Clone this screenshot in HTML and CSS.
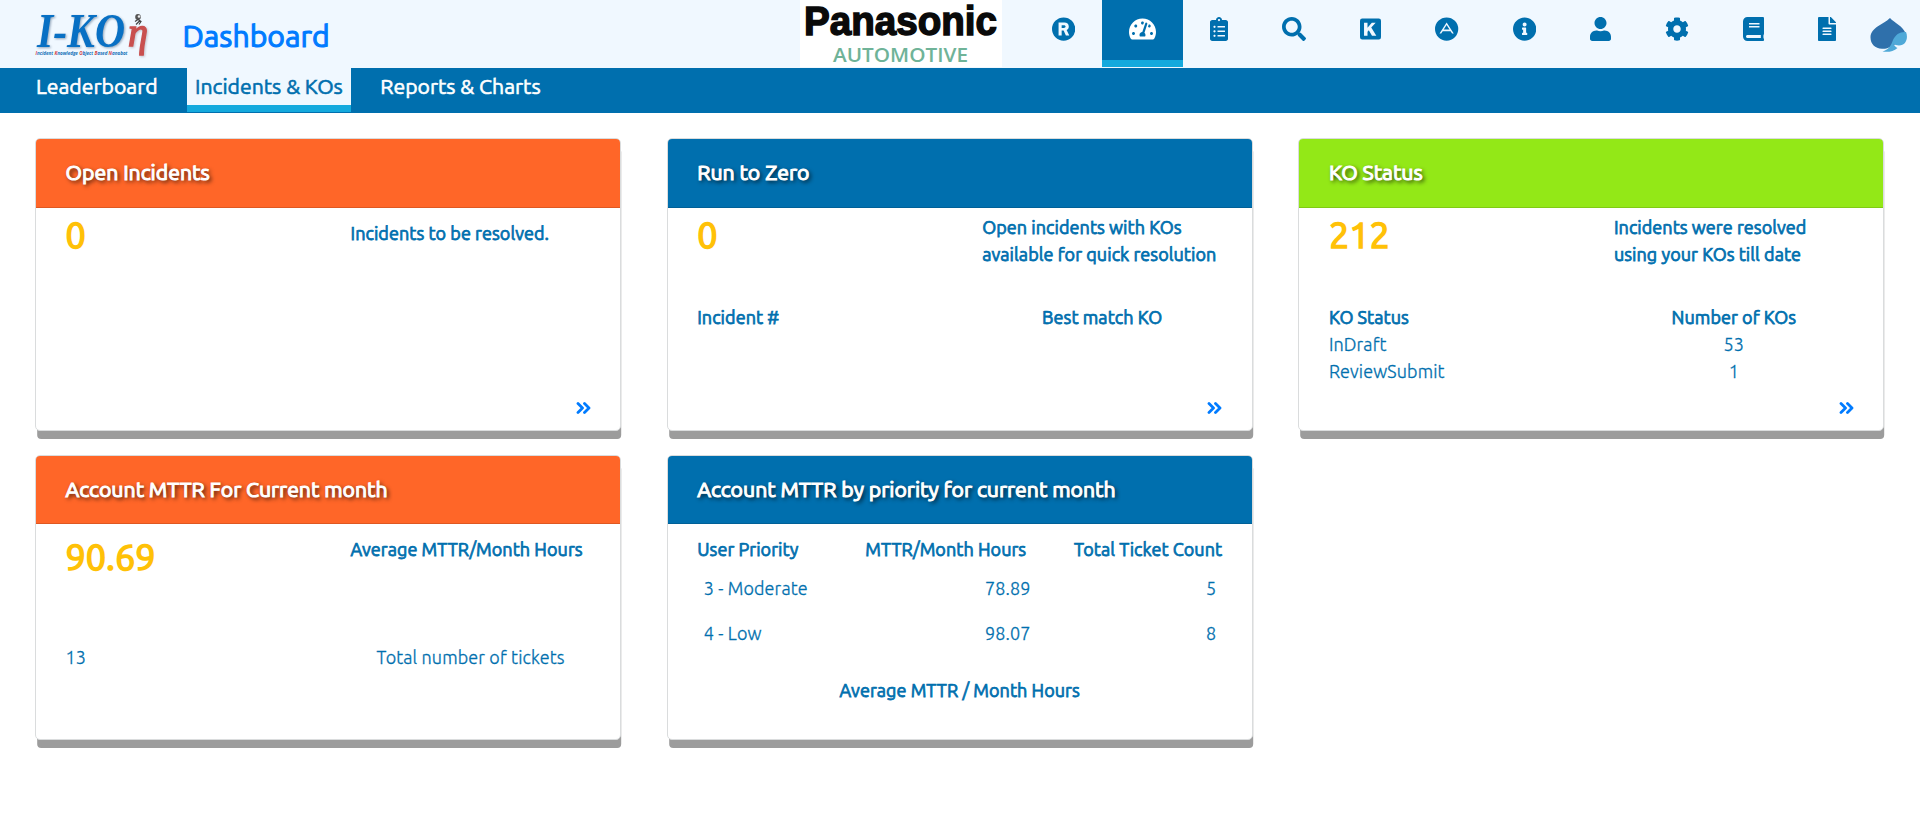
FILE: index.html
```html
<!DOCTYPE html>
<html lang="en">
<head>
<meta charset="utf-8">
<title>Dashboard</title>
<link rel="stylesheet" href="styles.css">
</head>
<body>
<header class="topbar">
  <svg class="logo" width="120" height="56" viewBox="0 0 120 56">
    <text class="logo-main" x="2" y="40.500" font-size="48" textLength="88" lengthAdjust="spacingAndGlyphs">I-KO</text>
    <text class="logo-eta" x="93" y="39.500" font-size="43" textLength="20" lengthAdjust="spacingAndGlyphs">η</text>
    <ellipse cx="103" cy="11" rx="2.800" ry="3" fill="#555"/>
    <circle cx="104" cy="10.500" r="1.300" fill="#eee"/>
    <path d="M100 15.500l3-2 3 2-2 3M101 18.500l4-4" stroke="#444" stroke-width="1.200" fill="none"/>
    <text class="logo-tag" x="0.500" y="48.500" font-size="5.800" textLength="92" lengthAdjust="spacingAndGlyphs"><tspan>I</tspan>ncident <tspan>K</tspan>nowledge <tspan>O</tspan>bject <tspan>B</tspan>ased <tspan>N</tspan>anobot</text>
  </svg>
  <h1 class="page-title">Dashboard</h1>
  <svg class="brand" width="202" height="67" viewBox="0 0 202 67">
    <rect width="202" height="67" fill="#fff"/>
    <text class="brand-name" x="4" y="34.500" font-size="41" textLength="193" lengthAdjust="spacingAndGlyphs">Panasonic</text>
    <text class="brand-sub" x="33" y="62" font-size="20.500" textLength="135" lengthAdjust="spacingAndGlyphs">AUTOMOTIVE</text>
  </svg>
  <nav class="icons">
    <a><svg class="w-496" viewBox="0 0 496 512"><path fill-rule="evenodd" d="M248 8a248 248 0 1 0 0 496a248 248 0 1 0 0-496zM140 118h122c60 0 96 32 96 84 0 36-18 62-46 76l56 114h-72l-48-102h-42v102h-66zM206 174v62h46c24 0 38-12 38-31s-14-31-38-31z"/></svg></a>
    <a class="active"><svg class="w-576" viewBox="0 0 576 512"><path d="M288 32C128.940 32 0 160.940 0 320c0 52.800 14.250 102.260 39.060 144.800 5.610 9.620 16.300 15.200 27.440 15.200h443c11.140 0 21.830-5.580 27.440-15.200C561.750 422.260 576 372.800 576 320c0-159.060-128.940-288-288-288zm0 64c14.710 0 26.580 10.130 30.320 23.650-1.110 2.260-2.640 4.230-3.450 6.670l-9.220 27.670c-5.130 3.490-10.970 6.010-17.640 6.010-17.670 0-32-14.330-32-32S270.330 96 288 96zM96 384c-17.670 0-32-14.330-32-32s14.330-32 32-32 32 14.330 32 32-14.330 32-32 32zm48-160c-17.670 0-32-14.330-32-32s14.330-32 32-32 32 14.330 32 32-14.330 32-32 32zm246.770-72.410l-61.330 184C343.130 347.330 352 364.540 352 384c0 11.720-3.380 22.550-8.880 32H232.880c-5.500-9.450-8.880-20.280-8.880-32 0-33.940 26.500-61.430 59.900-63.590l61.340-184.010c4.170-12.560 17.730-19.450 30.360-15.170 12.570 4.190 19.350 17.790 15.170 30.360zm14.660 57.200l15.520-46.550c3.470-1.290 7.130-2.230 11.050-2.230 17.670 0 32 14.330 32 32s-14.330 32-32 32c-11.380-.010-20.890-6.280-26.570-15.220zM480 384c-17.670 0-32-14.330-32-32s14.330-32 32-32 32 14.330 32 32-14.330 32-32 32z"/></svg></a>
    <a><svg class="w-384" viewBox="0 0 384 512"><path d="M336 64h-80c0-35.300-28.700-64-64-64s-64 28.700-64 64H48C21.500 64 0 85.500 0 112v352c0 26.500 21.500 48 48 48h288c26.500 0 48-21.500 48-48V112c0-26.500-21.500-48-48-48zM96 424c-13.300 0-24-10.700-24-24s10.700-24 24-24 24 10.700 24 24-10.700 24-24 24zm0-96c-13.300 0-24-10.700-24-24s10.700-24 24-24 24 10.700 24 24-10.700 24-24 24zm0-96c-13.300 0-24-10.700-24-24s10.700-24 24-24 24 10.700 24 24-10.700 24-24 24zm96-192c13.300 0 24 10.700 24 24s-10.700 24-24 24-24-10.700-24-24 10.700-24 24-24zm128 368c0 4.400-3.600 8-8 8H168c-4.400 0-8-3.600-8-8v-16c0-4.400 3.600-8 8-8h144c4.400 0 8 3.600 8 8v16zm0-96c0 4.400-3.600 8-8 8H168c-4.400 0-8-3.600-8-8v-16c0-4.400 3.600-8 8-8h144c4.400 0 8 3.600 8 8v16zm0-96c0 4.400-3.600 8-8 8H168c-4.400 0-8-3.600-8-8v-16c0-4.400 3.600-8 8-8h144c4.400 0 8 3.600 8 8v16z"/></svg></a>
    <a><svg class="w-512" viewBox="0 0 512 512"><path d="M505 442.700L405.300 343c-4.500-4.500-10.600-7-17-7H372c27.600-35.300 44-79.700 44-128C416 93.100 322.900 0 208 0S0 93.100 0 208s93.100 208 208 208c48.300 0 92.700-16.400 128-44v16.300c0 6.400 2.500 12.500 7 17l99.700 99.700c9.400 9.400 24.600 9.400 33.900 0l28.300-28.300c9.400-9.400 9.400-24.600.1-34zM208 336c-70.700 0-128-57.200-128-128 0-70.700 57.200-128 128-128 70.700 0 128 57.200 128 128 0 70.700-57.200 128-128 128z"/></svg></a>
    <a><svg class="w-448" viewBox="0 0 448 512"><path fill-rule="evenodd" d="M48 32h352a48 48 0 0 1 48 48v352a48 48 0 0 1-48 48H48a48 48 0 0 1-48-48V80a48 48 0 0 1 48-48zM86 120v278h74v-84l28-32 68 116h92L240 226l94-106h-82l-92 110V120z"/></svg></a>
    <a><svg class="w-496" viewBox="0 0 496 512"><path fill-rule="evenodd" d="M248 8a248 248 0 1 0 0 496a248 248 0 1 0 0-496zM248 118L96 350h36l32-48h168l32 48h36zM248 168l62 100H186z"/></svg></a>
    <a><svg class="w-496" viewBox="8 0 496 512"><path d="M256 8C119.043 8 8 119.083 8 256c0 136.997 111.043 248 248 248s248-111.003 248-248C504 119.083 392.957 8 256 8zm0 110c23.196 0 42 18.804 42 42s-18.804 42-42 42-42-18.804-42-42 18.804-42 42-42zm56 254c0 6.627-5.373 12-12 12h-88c-6.627 0-12-5.373-12-12v-24c0-6.627 5.373-12 12-12h12v-64h-12c-6.627 0-12-5.373-12-12v-24c0-6.627 5.373-12 12-12h64c6.627 0 12 5.373 12 12v100h12c6.627 0 12 5.373 12 12v24z"/></svg></a>
    <a><svg class="w-448" viewBox="0 0 448 512"><path d="M224 256c70.700 0 128-57.300 128-128S294.700 0 224 0 96 57.300 96 128s57.300 128 128 128zm89.600 32h-16.700c-22.200 10.200-46.900 16-72.900 16s-50.600-5.800-72.900-16h-16.700C60.200 288 0 348.200 0 422.400V464c0 26.500 21.500 48 48 48h352c26.500 0 48-21.500 48-48v-41.600c0-74.200-60.200-134.400-134.400-134.400z"/></svg></a>
    <a><svg class="w-512" viewBox="0 0 512 512"><path d="M487.400 315.700l-42.600-24.600c4.300-23.200 4.300-47 0-70.200l42.600-24.600c4.900-2.800 7.100-8.600 5.500-14-11.100-35.600-30-67.800-54.700-94.600-3.800-4.100-10-5.100-14.800-2.300L380.800 110c-17.900-15.400-38.500-27.300-60.800-35.100V25.800c0-5.600-3.900-10.500-9.400-11.700-36.700-8.200-74.300-7.800-109.200 0-5.500 1.200-9.400 6.100-9.400 11.700V75c-22.200 7.900-42.800 19.800-60.800 35.100L88.700 85.500c-4.900-2.800-11-1.900-14.800 2.300-24.700 26.700-43.600 58.900-54.700 94.600-1.700 5.400.6 11.200 5.500 14L67.300 221c-4.300 23.200-4.300 47 0 70.200l-42.600 24.600c-4.900 2.800-7.100 8.600-5.500 14 11.100 35.600 30 67.800 54.700 94.600 3.800 4.100 10 5.100 14.800 2.300l42.600-24.600c17.900 15.400 38.500 27.300 60.800 35.100v49.200c0 5.600 3.900 10.500 9.400 11.700 36.700 8.200 74.300 7.800 109.200 0 5.500-1.200 9.400-6.100 9.400-11.700v-49.200c22.200-7.900 42.800-19.800 60.800-35.100l42.600 24.600c4.900 2.800 11 1.900 14.800-2.300 24.700-26.700 43.600-58.900 54.700-94.600 1.500-5.500-.7-11.300-5.600-14.100zM256 336c-44.100 0-80-35.900-80-80s35.900-80 80-80 80 35.900 80 80-35.900 80-80 80z"/></svg></a>
    <a><svg class="w-448" viewBox="0 0 448 512"><path d="M448 360V24c0-13.300-10.700-24-24-24H96C43 0 0 43 0 96v320c0 53 43 96 96 96h328c13.300 0 24-10.700 24-24v-16c0-7.500-3.500-14.300-8.900-18.700-4.200-15.400-4.200-59.300 0-74.700 5.400-4.300 8.900-11.100 8.900-18.600zM128 134c0-3.300 2.700-6 6-6h212c3.300 0 6 2.700 6 6v20c0 3.300-2.700 6-6 6H134c-3.300 0-6-2.700-6-6v-20zm0 64c0-3.300 2.700-6 6-6h212c3.300 0 6 2.700 6 6v20c0 3.300-2.700 6-6 6H134c-3.300 0-6-2.700-6-6v-20zm253.400 250H96c-17.700 0-32-14.300-32-32 0-17.600 14.400-32 32-32h285.400c-1.900 17.100-1.900 46.900 0 64z"/></svg></a>
    <a><svg class="w-384" viewBox="0 0 384 512"><path d="M224 136V0H24C10.700 0 0 10.700 0 24v464c0 13.300 10.700 24 24 24h336c13.300 0 24-10.700 24-24V160H248c-13.200 0-24-10.800-24-24zm64 236c0 6.600-5.400 12-12 12H108c-6.600 0-12-5.400-12-12v-8c0-6.600 5.400-12 12-12h168c6.600 0 12 5.400 12 12v8zm0-64c0 6.600-5.400 12-12 12H108c-6.600 0-12-5.400-12-12v-8c0-6.600 5.400-12 12-12h168c6.600 0 12 5.400 12 12v8zm0-72v8c0 6.600-5.400 12-12 12H108c-6.600 0-12-5.400-12-12v-8c0-6.600 5.400-12 12-12h168c6.600 0 12 5.400 12 12zm96-114.100v6.100H256V0h6.100c6.400 0 12.500 2.500 17 7l97.900 98c4.500 4.500 7 10.600 7 16.900z"/></svg></a>
  </nav>
  <svg class="spade" width="38" height="35" viewBox="0 0 38 35">
    <path fill="#2f70ab" d="M20 0C24 4.500 33 8 36 16 36 24 27 25 21.500 28 18.500 30.300 15 31 12 30.800 5 30.500 0.500 26 0.500 19.500 0.500 9.500 14 6 20 0z"/>
    <path fill="#4fa9d8" d="M36 14C38.500 20 36 27.500 29 27.500 26.500 27.500 25 26.800 23.500 25.800 24.500 28 25.500 29 27.500 30 23.500 33.500 18 34.500 12.500 33.500 18.500 32 21 27.500 23 22 25.500 16.500 30 13.500 36 14z"/>
  </svg>
</header>
<nav class="tabs">
  <a>Leaderboard</a>
  <a class="active">Incidents &amp; KOs</a>
  <a>Reports &amp; Charts</a>
</nav>
<main class="board">
  <section class="card orange">
    <h2>Open Incidents</h2>
    <div class="body">
      <div class="summary"><b class="big">0</b><p class="one">Incidents to be resolved.</p></div>
      <a class="more"><svg width="15" height="12" viewBox="0 0 15 12"><path d="M2 1.500L6.500 6 2 10.500M8.500 1.500L13 6l-4.500 4.500"/></svg></a>
    </div>
  </section>
  <section class="card blue">
    <h2>Run to Zero</h2>
    <div class="body">
      <div class="summary"><b class="big">0</b><p>Open incidents with KOs<br>available for quick resolution</p></div>
      <div class="pair head"><span>Incident #</span><span>Best match KO</span></div>
      <a class="more"><svg width="15" height="12" viewBox="0 0 15 12"><path d="M2 1.500L6.500 6 2 10.500M8.500 1.500L13 6l-4.500 4.500"/></svg></a>
    </div>
  </section>
  <section class="card green">
    <h2>KO Status</h2>
    <div class="body">
      <div class="summary"><b class="big">212</b><p>Incidents were resolved<br>using your KOs till date</p></div>
      <div class="pair head"><span>KO Status</span><span>Number of KOs</span></div>
      <div class="pair"><span>InDraft</span><span>53</span></div>
      <div class="pair"><span>ReviewSubmit</span><span>1</span></div>
      <a class="more"><svg width="15" height="12" viewBox="0 0 15 12"><path d="M2 1.500L6.500 6 2 10.500M8.500 1.500L13 6l-4.500 4.500"/></svg></a>
    </div>
  </section>
  <section class="card orange short">
    <h2>Account MTTR For Current month</h2>
    <div class="body">
      <div class="summary"><b class="big">90.69</b><p>Average MTTR/Month Hours</p></div>
      <div class="pair"><span>13</span><span>Total number of tickets</span></div>
    </div>
  </section>
  <section class="card blue short">
    <h2>Account MTTR by priority for current month</h2>
    <div class="body">
      <div class="triple"><span>User Priority</span><span>MTTR/Month Hours</span><span>Total Ticket Count</span></div>
      <div class="row"><span>3 - Moderate</span><span>78.89</span><span>5</span></div>
      <div class="row"><span>4 - Low</span><span>98.07</span><span>8</span></div>
      <div class="foot">Average MTTR / Month Hours</div>
    </div>
  </section>
</main>
</body>
</html>
```
FILE: styles.css
```css
* { box-sizing: border-box; }
body { margin: 0; min-height: 834px; background: #fff; color: #006fae; font: 300 18px/27px "Ubuntu", "Noto Sans", sans-serif; }
h1, h2, p { margin: 0; font-weight: 400; }

.topbar { display: flex; align-items: flex-start; height: 68px; background: #f0f8ff; }
.logo { margin: 6px 0 0 35px; flex: none; }
.logo text { font-family: "Liberation Serif", serif; font-style: italic; font-weight: bold; }
.logo .logo-main { fill: #0870c4; filter: drop-shadow(1px 1.5px 1px #8fa3b8); }
.logo .logo-eta { fill: #c9504f; font-weight: normal; stroke: #c9504f; stroke-width: 1.4px; filter: drop-shadow(1px 1px 1px #c3c3cc); }
.logo .logo-tag { fill: #1873b9; font-family: "Open Sans", sans-serif; }
.logo-tag tspan { fill: #d2403c; }
.page-title { flex: none; width: 645px; padding-left: 27.500px; margin-top: 16px; color: #007bff; font-size: 30.200px; line-height: 40px; -webkit-text-stroke: 1.1px; }
.brand { flex: none; }
.brand-name { font-family: "Liberation Sans", sans-serif; font-weight: bold; fill: #0a0a0a; stroke: #0a0a0a; stroke-width: 1.5px; }
.brand-sub { font-family: "Open Sans", sans-serif; font-weight: 600; fill: #6fb398; }
.icons { display: flex; margin-left: 23px; flex: none; }
.icons a { padding: 17px 27px 0; height: 67px; }
.icons svg { display: block; height: 24px; fill: #006fae; }
.icons .active { background: #006fae; border-bottom: 7px solid #14a9dd; }
.icons .active svg { fill: #fff; }
.icons .w-384 { width: 18px; }
.icons .w-448 { width: 21px; }
.icons .w-496 { width: 23.250px; }
.icons .w-512 { width: 24px; }
.icons .w-576 { width: 27px; }
.spade { flex: none; margin: 18px 0 0 7.500px; }

.tabs { display: flex; gap: 21.500px; height: 45px; padding-left: 28px; background: #006fae; }
.tabs a { height: 44px; padding: 3px 8px 0; color: #fff; font-size: 21.200px; font-weight: 400; line-height: 30px; -webkit-text-stroke: 0.6px; }
.tabs .active { background: #f0f8ff; color: #006fae; border-bottom: 7px solid #14a9dd; }

.board { display: grid; grid-template-columns: repeat(3, 586px); column-gap: 45.700px; row-gap: 25px; padding: 25px 0 40px 35px; }
.card { height: 292.500px; margin-bottom: -0.500px; border: 1px solid #dadcdd; border-radius: 5px; background: #fff; box-shadow: 1.2px 9px 0 -1px #9c9c9c; display: flex; flex-direction: column; }
.card.short { height: 285px; }
.card h2 { height: 69px; padding: 18px 29.500px 0; border-bottom: 1px solid rgba(0, 0, 0, 0.13); border-radius: 4px 4px 0 0; color: #fff; font-size: 21.250px; line-height: 30px; -webkit-text-stroke: 1.1px; text-shadow: 2px 2px 4px #000; }
.card.short h2 { height: 68px; }
.orange h2 { background: #ff6628; }
.blue h2 { background: #006fae; }
.green h2 { background: #93e817; }
.body { flex: 1; display: flex; flex-direction: column; padding: 6px 29.500px 0; }
.summary { display: grid; grid-template-columns: 285px 1fr; height: 90px; }
.summary p, .head, .triple, .foot { font-weight: 400; letter-spacing: 0.060px; -webkit-text-stroke: 0.75px; }
.summary .one { padding-top: 6px; }
.big { color: #ffc107; font-size: 36px; font-weight: 400; line-height: 40px; padding-top: 1px; -webkit-text-stroke: 1.6px; }
.pair { display: grid; grid-template-columns: 285px 240px; }
.pair:not(.head), .row { letter-spacing: 0.150px; -webkit-text-stroke: 0.300px; }
.pair span:last-child { text-align: center; }
.more { margin: auto 0 15.500px auto; height: 12px; display: flex; }
.more svg path { fill: none; stroke: #007bff; stroke-width: 2.800; stroke-linecap: round; stroke-linejoin: round; }
.short .body { padding-top: 12px; }
.short .summary { height: 108px; }
.triple { display: grid; grid-template-columns: 168px 1fr auto; }
.row { display: grid; grid-template-columns: 170px 157px 1fr; height: 45px; padding: 12px 6px 0 6.500px; }
.row span + span { text-align: right; }
.foot { margin-top: 24px; text-align: center; }
```
